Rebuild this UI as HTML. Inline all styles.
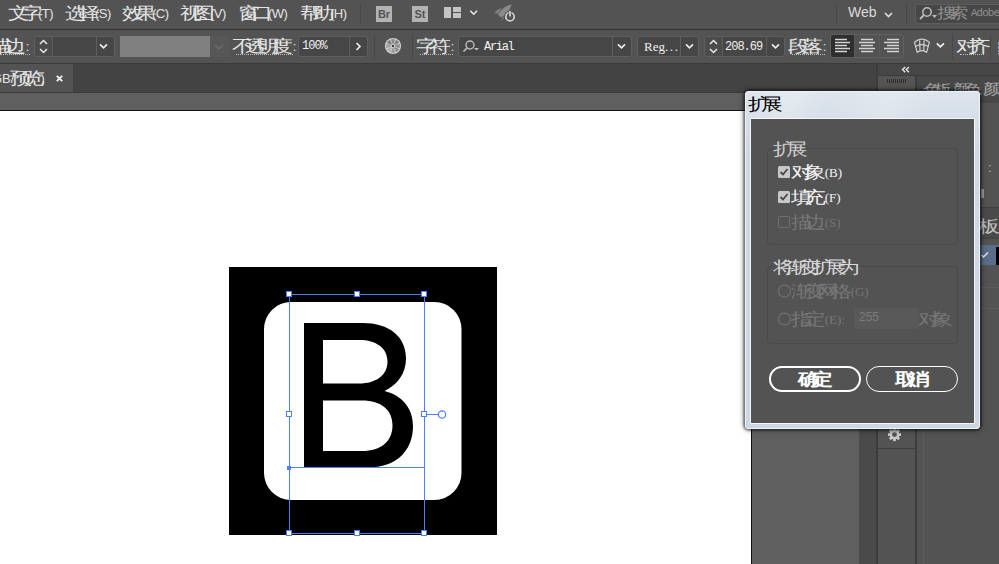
<!DOCTYPE html>
<html><head><meta charset="utf-8">
<style>
*{box-sizing:border-box;margin:0;padding:0}
html,body{width:999px;height:564px;overflow:hidden;background:#535353;font-family:"Liberation Sans",sans-serif}
.a{position:absolute}
.t{position:absolute;white-space:nowrap;color:#e4e4e4;font-size:13px;line-height:15px}
.m{font-family:"Liberation Mono",monospace}
.sep{position:absolute;width:1px;background:#444}
.box{position:absolute;background:#464646;border:1px solid #5f5f5f;border-radius:3px}
.dv{position:absolute;width:1px;background:#5c5c5c}
.ul{border-bottom:1px dotted #cfcfcf}
.c{display:inline-block;width:1em;text-align:center;transform:scale(1.65,1.28)}.cc{display:inline-block;width:1em;text-align:center}</style></head><body>
<!-- menu bar -->
<div class="a" style="left:0;top:0;width:999px;height:29px;background:#535353"></div>
<div class="a" style="left:0;top:29px;width:999px;height:1px;background:#333"></div>
<div class="t" style="left:12px;top:6px;letter-spacing:-0.5px"><span class="c">文</span><span class="c">字</span>(T)</div>
<div class="t" style="left:69px;top:6px;letter-spacing:-0.5px"><span class="c">选</span><span class="c">择</span>(S)</div>
<div class="t" style="left:126px;top:6px;letter-spacing:-0.5px"><span class="c">效</span><span class="c">果</span>(C)</div>
<div class="t" style="left:184px;top:6px;letter-spacing:-0.5px"><span class="c">视</span><span class="c">图</span>(V)</div>
<div class="t" style="left:242px;top:6px;letter-spacing:-0.5px"><span class="c">窗</span><span class="c">口</span>(W)</div>
<div class="t" style="left:304px;top:6px;letter-spacing:-0.5px"><span class="c">帮</span><span class="c">助</span>(H)</div>
<div class="sep" style="left:360px;top:4px;height:20px;background:#474747"></div>
<!-- Br / St -->
<div class="a" style="left:376px;top:6px;width:16px;height:16px;background:#b3b3b3"></div>
<div class="a" style="left:376px;top:6px;width:16px;height:16px;color:#535353;font:bold 11px/16px 'Liberation Sans';text-align:center">Br</div>
<div class="a" style="left:412px;top:6px;width:16px;height:16px;background:#b3b3b3"></div>
<div class="a" style="left:412px;top:6px;width:16px;height:16px;color:#535353;font:bold 11px/16px 'Liberation Sans';text-align:center">St</div>
<svg class="a" style="left:440px;top:0" width="100" height="29">
 <rect x="4" y="7" width="7" height="11" fill="#c4c4c4"/>
 <rect x="13" y="7" width="8" height="5" fill="#c4c4c4"/>
 <rect x="13" y="13" width="8" height="5" fill="#c4c4c4"/>
 <path d="M30.3 10.8 L33.7 14.2 L37.1 10.8" stroke="#e8e8e8" stroke-width="1.6" fill="none"/>
 <path d="M71.5 4.5 C66 5.5 61 9.5 58 14.5 L61 17.5 C66 14.5 70 10.5 71.5 4.5 Z" fill="#8a8a8a"/>
 <path d="M54 13.5 C56 10.5 59 8.5 62 8 L58 13.5 Z" fill="#808080"/>
 <path d="M61.5 21 L62.5 17.5 L65 16.5 Z" fill="#808080"/>
 <circle cx="70" cy="16.7" r="6" fill="#535353"/>
 <circle cx="70" cy="16.7" r="4.2" stroke="#d4d4d4" stroke-width="1.7" fill="none"/>
 <path d="M70 11 V17" stroke="#535353" stroke-width="3"/>
 <path d="M70 11 V16.5" stroke="#d4d4d4" stroke-width="1.7"/>
</svg>
<div class="sep" style="left:836px;top:4px;height:20px;background:#474747"></div>
<div class="t" style="left:848px;top:5px;color:#dcdcdc;font-size:14px">Web</div>
<svg class="a" style="left:883px;top:10px" width="12" height="10"><path d="M2 3 L5.5 6.5 L9 3" stroke="#e0e0e0" stroke-width="1.6" fill="none"/></svg>
<div class="sep" style="left:906px;top:4px;height:20px;background:#474747"></div>
<div class="a" style="left:915px;top:4px;width:100px;height:20px;background:#474747;border:1px solid #5d5d5d;border-radius:3px"></div>
<svg class="a" style="left:918px;top:4px" width="22" height="20">
 <circle cx="9" cy="8" r="4.2" stroke="#bdbdbd" stroke-width="1.5" fill="none"/>
 <path d="M6 11 L2 15" stroke="#bdbdbd" stroke-width="1.8"/>
 <path d="M14 11 L19 11 L16.5 14 Z" fill="#bdbdbd"/>
</svg>
<div class="t" style="left:941px;top:6px;color:#8f8f8f;font-size:12px"><span class="c">搜</span><span class="c">索</span></div>
<div class="t m" style="left:971px;top:6px;color:#8f8f8f;font-size:11px;letter-spacing:-1px">Adobe</div>


<!-- control bar -->
<div class="a" style="left:0;top:30px;width:999px;height:33px;background:#535353"></div>
<div class="a" style="left:0;top:63px;width:999px;height:1px;background:#3a3a3a"></div>


<!-- control bar items -->
<div class="t" style="left:-5px;top:39px"><span class="c">描</span><span class="c">边</span><span class="cc">:</span></div>
<div class="a ul" style="left:0;top:54px;width:30px;height:1px;border-bottom-color:#bdbdbd"></div>
<div class="box" style="left:34px;top:36px;width:81px;height:21px"></div>
<div class="a" style="left:35px;top:37px;width:17px;height:19px;background:#4b4b4b;border-radius:2px 0 0 2px"></div>
<div class="dv" style="left:52px;top:37px;height:19px"></div>
<div class="dv" style="left:96px;top:37px;height:19px"></div>
<svg class="a" style="left:36px;top:37px" width="16" height="19"><path d="M4 7 L7.5 3.5 L11 7 M4 12 L7.5 15.5 L11 12" stroke="#e8e8e8" stroke-width="1.5" fill="none"/></svg>
<svg class="a" style="left:97px;top:37px" width="16" height="19"><path d="M3 7.3 L6.5 10.8 L10 7.3" stroke="#ececec" stroke-width="1.7" fill="none"/></svg>
<div class="a" style="left:120px;top:36px;width:90px;height:21px;background:#808080"></div>
<div class="a" style="left:210px;top:36px;width:19px;height:21px;background:#575757;border-radius:0 2px 2px 0"></div>
<svg class="a" style="left:212px;top:37px" width="16" height="19"><path d="M3 8 L7 12 L11 8" stroke="#6d6d6d" stroke-width="1.4" fill="none"/></svg>
<div class="t" style="left:236px;top:39px"><span class="c">不</span><span class="c">透</span><span class="c">明</span><span class="c">度</span><span class="cc">:</span></div>
<div class="a ul" style="left:236px;top:54px;width:57px;height:1px;border-bottom-color:#bdbdbd"></div>
<div class="box" style="left:298px;top:36px;width:70px;height:21px"></div>
<div class="dv" style="left:349px;top:37px;height:19px"></div>
<div class="t m" style="left:302px;top:39px;color:#f0f0f0;font-size:12px;letter-spacing:-1px">100%</div>
<svg class="a" style="left:350px;top:37px" width="17" height="19"><path d="M6.5 6 L10 9.5 L6.5 13" stroke="#ececec" stroke-width="1.7" fill="none"/></svg>
<div class="sep" style="left:374px;top:34px;height:25px;background:#484848"></div>
<svg class="a" style="left:383px;top:36px" width="20" height="20">
 <circle cx="10" cy="10" r="8.1" fill="#d2d2d2"/>
 <path d="M9.29 7.81 L7.87 3.44 A6.9 6.9 0 0 1 12.13 3.44 L10.71 7.81 A2.3 2.3 0 0 0 9.29 7.81 Z" fill="#8a8a8a"/>
 <path d="M11.04 7.95 L13.13 3.85 A6.9 6.9 0 0 1 16.15 6.87 L12.05 8.96 A2.3 2.3 0 0 0 11.04 7.95 Z" fill="#808080"/>
 <path d="M12.19 9.29 L16.56 7.87 A6.9 6.9 0 0 1 16.56 12.13 L12.19 10.71 A2.3 2.3 0 0 0 12.19 9.29 Z" fill="#8e8e8e"/>
 <path d="M12.05 11.04 L16.15 13.13 A6.9 6.9 0 0 1 13.13 16.15 L11.04 12.05 A2.3 2.3 0 0 0 12.05 11.04 Z" fill="#8e8e8e"/>
 <path d="M10.71 12.19 L12.13 16.56 A6.9 6.9 0 0 1 7.87 16.56 L9.29 12.19 A2.3 2.3 0 0 0 10.71 12.19 Z" fill="#9a9a9a"/>
 <path d="M8.96 12.05 L6.87 16.15 A6.9 6.9 0 0 1 3.85 13.13 L7.95 11.04 A2.3 2.3 0 0 0 8.96 12.05 Z" fill="#b2b2b2"/>
 <path d="M7.81 10.71 L3.44 12.13 A6.9 6.9 0 0 1 3.44 7.87 L7.81 9.29 A2.3 2.3 0 0 0 7.81 10.71 Z" fill="#a0a0a0"/>
 <path d="M7.95 8.96 L3.85 6.87 A6.9 6.9 0 0 1 6.87 3.85 L8.96 7.95 A2.3 2.3 0 0 0 7.95 8.96 Z" fill="#7e7e7e"/>
 <circle cx="10" cy="10" r="1.2" fill="#3a3a3a"/>
</svg>
<div class="sep" style="left:412px;top:34px;height:25px;background:#484848"></div>
<div class="t" style="left:420px;top:39px"><span class="c">字</span><span class="c">符</span><span class="cc">:</span></div>
<div class="a ul" style="left:420px;top:54px;width:33px;height:1px;border-bottom-color:#bdbdbd"></div>
<div class="box" style="left:458px;top:36px;width:174px;height:21px"></div>
<div class="dv" style="left:612px;top:37px;height:19px"></div>
<svg class="a" style="left:460px;top:37px" width="22" height="19">
 <circle cx="10" cy="8" r="4" stroke="#bdbdbd" stroke-width="1.4" fill="none"/>
 <path d="M7.5 10.5 L3.5 14.5" stroke="#bdbdbd" stroke-width="1.7"/>
 <path d="M14 11 L19 11 L16.5 13.5 Z" fill="#bdbdbd"/>
</svg>
<div class="t m" style="left:484px;top:40px;color:#f4f4f4;font-size:12px;letter-spacing:-1.3px">Arial</div>
<svg class="a" style="left:613px;top:37px" width="18" height="19"><path d="M5 7.3 L8.5 10.8 L12 7.3" stroke="#ececec" stroke-width="1.7" fill="none"/></svg>
<div class="box" style="left:637px;top:36px;width:62px;height:21px"></div>
<div class="dv" style="left:680px;top:37px;height:19px"></div>
<div class="t" style="left:644px;top:39px;color:#f0f0f0;font-family:'Liberation Serif';font-size:13px;letter-spacing:0px">Reg<span style="letter-spacing:1.6px">...</span></div>
<svg class="a" style="left:681px;top:37px" width="18" height="19"><path d="M5 7.3 L8.5 10.8 L12 7.3" stroke="#ececec" stroke-width="1.7" fill="none"/></svg>
<div class="box" style="left:704px;top:36px;width:81px;height:21px"></div>
<div class="a" style="left:705px;top:37px;width:17px;height:19px;background:#4b4b4b;border-radius:2px 0 0 2px"></div>
<div class="dv" style="left:722px;top:37px;height:19px"></div>
<div class="dv" style="left:766px;top:37px;height:19px"></div>
<svg class="a" style="left:705px;top:37px" width="17" height="19"><path d="M5 7 L8.5 3.5 L12 7 M5 12 L8.5 15.5 L12 12" stroke="#e8e8e8" stroke-width="1.5" fill="none"/></svg>
<div class="t m" style="left:725px;top:40px;color:#f0f0f0;font-size:12px;letter-spacing:-1px">208.69</div>
<svg class="a" style="left:767px;top:37px" width="17" height="19"><path d="M5 7.3 L8.5 10.8 L12 7.3" stroke="#ececec" stroke-width="1.7" fill="none"/></svg>
<div class="t" style="left:792px;top:39px"><span class="c">段</span><span class="c">落</span><span class="cc">:</span></div>
<div class="a ul" style="left:792px;top:54px;width:33px;height:1px;border-bottom-color:#bdbdbd"></div>
<div class="box" style="left:830px;top:34px;width:74px;height:24px;background:#535353;border-color:#616161;border-radius:4px"></div>
<div class="a" style="left:831px;top:35px;width:23px;height:22px;background:#2e2e2e;border-radius:3px 0 0 3px"></div>
<div class="dv" style="left:854px;top:36px;height:21px;background:#5a5a5a"></div>
<div class="dv" style="left:879px;top:36px;height:21px;background:#5a5a5a"></div>
<svg class="a" style="left:831px;top:35px" width="73" height="23">
 <g stroke="#d4d4d4" stroke-width="1.3">
  <path d="M4 4.5 H16 M4 7.5 H19 M4 10.5 H16 M4 13.5 H19 M4 16.5 H16"/>
  <path d="M30 4.5 H42 M28 7.5 H44 M30 10.5 H42 M28 13.5 H44 M30 16.5 H42"/>
  <path d="M56 4.5 H68 M53 7.5 H68 M56 10.5 H68 M53 13.5 H68 M56 16.5 H68"/>
 </g>
</svg>
<svg class="a" style="left:911px;top:36px" width="38" height="20">
 <path d="M3.4 6.2 Q10.9 0 18.4 6.2 L15.6 16.3 Q10.9 12.8 6.2 16.3 Z M4.7 10.3 Q10.9 6.8 17.1 10.3 M8.6 2.9 L9 14.3 M13.2 2.9 L12.8 14.3" stroke="#cfcfcf" stroke-width="1.2" fill="none" stroke-linejoin="round"/>
 <path d="M25.8 7.3 L29.4 10.9 L33 7.3" stroke="#f0f0f0" stroke-width="1.7" fill="none"/>
</svg>
<div class="sep" style="left:952px;top:34px;height:25px;background:#484848"></div>
<div class="t" style="left:960px;top:39px"><span class="c">对</span><span class="c">齐</span></div>
<div class="a ul" style="left:960px;top:54px;width:24px;height:1px;border-bottom-color:#bdbdbd"></div>
<div class="sep" style="left:990px;top:34px;height:25px;background:#484848"></div>
<div class="a" style="left:998px;top:42px;width:1px;height:3px;background:#8ea6c4"></div><div class="a" style="left:998px;top:46px;width:1px;height:3px;background:#8ea6c4"></div><div class="a" style="left:998px;top:50px;width:1px;height:2px;background:#8ea6c4"></div><div class="a" style="left:998px;top:53px;width:1px;height:1px;background:#cfcfcf"></div>

<!-- tab bar -->
<div class="a" style="left:0;top:64px;width:999px;height:28px;background:#434343"></div>
<div class="a" style="left:0;top:64px;width:73px;height:28px;background:#535353"></div>
<div class="a" style="left:0;top:92px;width:751px;height:1px;background:#3a3a3a"></div>
<div class="a" style="left:0;top:93px;width:751px;height:17px;background:#5f5f5f"></div>
<div class="a" style="left:0;top:110px;width:751px;height:1px;background:#111"></div>
<!-- canvas -->
<div class="a" style="left:0;top:111px;width:751px;height:453px;background:#fff"></div>
<div class="a" style="left:751px;top:92px;width:1px;height:472px;background:#111"></div>
<div class="a" style="left:752px;top:92px;width:107px;height:472px;background:#5f5f5f"></div>
<div class="a" style="left:859px;top:92px;width:17px;height:472px;background:#4a4a4a"></div>
<div class="a" style="left:878px;top:64px;width:121px;height:500px;background:#535353"></div>
<div class="a" style="left:876px;top:64px;width:2px;height:500px;background:#3c3c3c"></div>


<!-- tab text -->
<div class="t" style="left:-8px;top:71px;color:#e6e6e6">GB/<span class="c">预</span><span class="c">览</span>)</div>
<svg class="a" style="left:55px;top:74px" width="10" height="10"><path d="M1.8 1.8 L7.2 7.2 M7.2 1.8 L1.8 7.2" stroke="#f0f0f0" stroke-width="1.9"/></svg>

<!-- artwork -->
<svg class="a" style="left:0;top:0" width="751" height="564">
 <rect x="229" y="267" width="268" height="268" fill="#000"/>
 <rect x="264" y="302" width="197.5" height="198" rx="27" ry="27" fill="#fff"/>
 <path fill="#000" fill-rule="evenodd" d="M304 323 H363 C389 323 406 336.5 406 358.5 C406 374 397 385 384.5 391 C402 395.5 413 408 413 426 C413 451 396 467.5 368 467.5 H304 Z
  M323 340 V383.5 H359 C376.5 383.5 387.5 375 387.5 361.5 C387.5 348 376.5 340 359 340 Z
  M323 400.5 V451 H362 C381.5 451 392.5 441 392.5 425.5 C392.5 410 381.5 400.5 362 400.5 Z"/>
 <g stroke="#4d7eff" stroke-width="1" fill="none" shape-rendering="crispEdges">
  <path d="M289.5 294.5 H424.5 V533.5 H289.5 Z"/>
  <path d="M289.5 467.5 H424.5"/>
  <path d="M424.5 414.5 H438"/>
 </g>
 <g stroke="#4d7eff" stroke-width="1" fill="#fff" shape-rendering="crispEdges">
  <rect x="286.5" y="291.5" width="5" height="5"/>
  <rect x="354.5" y="291.5" width="5" height="5"/>
  <rect x="421.5" y="291.5" width="5" height="5"/>
  <rect x="286.5" y="411.5" width="5" height="5"/>
  <rect x="421.5" y="411.5" width="5" height="5"/>
  <rect x="286.5" y="530.5" width="5" height="5"/>
  <rect x="354.5" y="530.5" width="5" height="5"/>
  <rect x="421.5" y="530.5" width="5" height="5"/>
 </g>
 <rect x="287" y="466" width="4" height="4" fill="#4d7eff"/>
 <circle cx="442" cy="414.5" r="3.7" stroke="#4d7eff" stroke-width="1.2" fill="#fff"/>
</svg>

<!-- right dock -->
<div class="a" style="left:878px;top:64px;width:121px;height:11px;background:#464646"></div>
<svg class="a" style="left:900px;top:65px" width="12" height="9"><path d="M5.2 2 L2.6 4.6 L5.2 7.2 M8.9 2 L6.3 4.6 L8.9 7.2" stroke="#e0e0e0" stroke-width="1.5" fill="none"/></svg>
<div class="a" style="left:878px;top:75px;width:121px;height:1px;background:#3c3c3c"></div>
<div class="a" style="left:878px;top:76px;width:37px;height:27px;background:#545454"></div>
<svg class="a" style="left:886px;top:78px" width="22" height="6"><path d="M1.5 1 V5 M3.5 1 V5 M5.5 1 V5 M7.5 1 V5 M9.5 1 V5 M11.5 1 V5 M13.5 1 V5 M15.5 1 V5 M17.5 1 V5 M19.5 1 V5" stroke="#2e2e2e" stroke-width="1"/></svg>
<div class="a" style="left:915px;top:76px;width:2px;height:488px;background:#3d3d3d"></div>
<div class="a" style="left:917px;top:76px;width:82px;height:27px;background:#484848"></div>
<div class="a" style="left:949px;top:75px;width:1px;height:28px;background:#424242"></div>
<div class="a" style="left:978px;top:75px;width:1px;height:28px;background:#424242"></div>
<div class="t" style="left:927px;top:82px;color:#a8a8a8;font-size:11px"><span class="c">色</span><span class="c">板</span></div>
<div class="t" style="left:957px;top:82px;color:#a8a8a8;font-size:11px"><span class="c">颜</span><span class="c">色</span></div>
<div class="t" style="left:987px;top:82px;color:#a8a8a8;font-size:12px"><span class="c">颜</span></div>
<div class="a" style="left:917px;top:103px;width:82px;height:461px;background:#535353"></div>
<div class="a" style="left:923px;top:103px;width:1px;height:461px;background:#5c5c5c"></div>
<div class="t" style="left:988px;top:160px;color:#bbb">:</div>
<div class="a" style="left:981px;top:189px;width:3px;height:9px;background:#9a9a9a"></div>
<div class="a" style="left:917px;top:207px;width:82px;height:1px;background:#3f3f3f"></div>
<div class="a" style="left:917px;top:208px;width:82px;height:30px;background:#4a4a4a"></div>
<div class="a" style="left:917px;top:238px;width:82px;height:1px;background:#424242"></div>
<div class="t" style="left:982px;top:219px;color:#c4c4c4"><span class="c">板</span></div>
<div class="a" style="left:917px;top:245px;width:82px;height:20px;background:#5a6d88"></div>
<svg class="a" style="left:980px;top:250px" width="10" height="10"><path d="M1.5 5 L3.5 7 L8 2.5" stroke="#e8e8e8" stroke-width="1.4" fill="none"/></svg>
<div class="a" style="left:996px;top:247px;width:3px;height:18px;background:#000"></div>
<div class="a" style="left:917px;top:287px;width:82px;height:1px;background:#5c5c5c"></div>
<div class="a" style="left:917px;top:308px;width:82px;height:1px;background:#5c5c5c"></div>
<div class="a" style="left:878px;top:448px;width:37px;height:1px;background:#3d3d3d"></div>
<svg class="a" style="left:886px;top:426px" width="17" height="17">
 <g transform="translate(8.5,8.6)" fill="#c8c8c8">
  <circle r="4.9"/>
  <rect x="-1.4" y="-6.5" width="2.8" height="13"/>
  <rect x="-1.4" y="-6.5" width="2.8" height="13" transform="rotate(45)"/>
  <rect x="-1.4" y="-6.5" width="2.8" height="13" transform="rotate(90)"/>
  <rect x="-1.4" y="-6.5" width="2.8" height="13" transform="rotate(135)"/>
  <circle r="2.4" fill="#535353"/>
 </g>
</svg>

<!-- dialog -->
<div class="a" style="left:744px;top:90px;width:237px;height:340px;border-radius:5px;background:rgba(0,0,0,.5);box-shadow:0 0 6px rgba(0,0,0,.35), 0 0 2px 1px rgba(0,0,0,.4)"></div>
<div class="a" style="left:745px;top:91px;width:235px;height:338px;border-radius:4px;background:linear-gradient(180deg,#dde4ec 0px,#d6dee8 27px,#cfd9e4 60px,#cdd7e3 100%);box-shadow:inset 0 0 0 1px #eef2f6"></div>
<div class="a" style="left:746px;top:92px;width:233px;height:26px;border-radius:3px 3px 0 0;background:linear-gradient(110deg,rgba(255,255,255,0) 0%,rgba(255,255,255,.25) 20%,rgba(255,255,255,0) 35%,rgba(255,255,255,.2) 60%,rgba(255,255,255,0) 80%)"></div>
<div class="t" style="left:752px;top:97px;color:#000;font-size:13px"><span class="c">扩</span><span class="c">展</span></div>
<div class="a" style="left:750px;top:118px;width:225px;height:306px;background:#f4f6f8"></div>
<div class="a" style="left:751px;top:119px;width:223px;height:304px;background:#535353"></div>

<div class="a" style="left:767px;top:148px;width:191px;height:97px;border:1px solid #4a4a4a;border-radius:4px"></div>
<div class="a" style="left:774px;top:142px;width:32px;height:14px;background:#535353"></div>
<div class="t" style="left:777px;top:142px;color:#cdcdcd"><span class="c">扩</span><span class="c">展</span></div>
<svg class="a" style="left:776px;top:164px" width="16" height="66">
 <rect x="2" y="2" width="12" height="12" rx="1.5" fill="#c8c8c8"/>
 <path d="M4.5 8 L7 10.5 L11.5 5" stroke="#474747" stroke-width="1.8" fill="none"/>
 <rect x="2" y="27" width="12" height="12" rx="1.5" fill="#c8c8c8"/>
 <path d="M4.5 33 L7 35.5 L11.5 30" stroke="#474747" stroke-width="1.8" fill="none"/>
 <rect x="2.5" y="52.5" width="11" height="11" rx="1" stroke="#707070" stroke-width="1" fill="none"/>
</svg>
<div class="t" style="left:795px;top:165px;color:#f4f4f4;"><span class="c">对</span><span class="c">象</span> <span style="font-family:'Liberation Serif'">(B)</span></div>
<div class="t" style="left:795px;top:190px;color:#f4f4f4;"><span class="c">填</span><span class="c">充</span> <span style="font-family:'Liberation Serif'">(F)</span></div>
<div class="t" style="left:795px;top:215px;color:#767676;"><span class="c">描</span><span class="c">边</span> <span style="font-family:'Liberation Serif'">(S)</span></div>

<div class="a" style="left:767px;top:266px;width:191px;height:78px;border:1px solid #4a4a4a;border-radius:4px"></div>
<div class="a" style="left:774px;top:259px;width:84px;height:14px;background:#535353"></div>
<div class="t" style="left:777px;top:260px;color:#d8d8d8"><span class="c">将</span><span class="c">渐</span><span class="c">变</span><span class="c">扩</span><span class="c">展</span><span class="c">为</span></div>
<svg class="a" style="left:776px;top:282px" width="18" height="46">
 <circle cx="8.5" cy="9" r="6" stroke="#6c6c6c" stroke-width="1.3" fill="none"/>
 <circle cx="8.5" cy="37" r="6" stroke="#6c6c6c" stroke-width="1.3" fill="none"/>
</svg>
<div class="t" style="left:795px;top:284px;color:#767676;"><span class="c">渐</span><span class="c">变</span><span class="c">网</span><span class="c">格</span> <span style="font-family:'Liberation Serif'">(G)</span></div>
<div class="t" style="left:795px;top:312px;color:#767676;"><span class="c">指</span><span class="c">定</span> <span style="font-family:'Liberation Serif'">(E):</span></div>
<div class="a" style="left:854px;top:308px;width:65px;height:21px;background:#595959"></div>
<div class="t" style="left:859px;top:310px;color:#7b7b7b;font-size:12px">255</div>
<div class="t" style="left:922px;top:312px;color:#767676"><span class="c">对</span><span class="c">象</span></div>

<div class="a" style="left:769px;top:366px;width:92px;height:26px;border:2px solid #fff;border-radius:13px"></div>
<div class="t" style="left:769px;top:372px;width:92px;text-align:center;color:#fff;font-weight:bold"><span class="c">确</span><span class="c">定</span></div>
<div class="a" style="left:866px;top:366px;width:92px;height:26px;border:1.5px solid #fff;border-radius:13px"></div>
<div class="t" style="left:866px;top:372px;width:92px;text-align:center;color:#fff;font-weight:bold"><span class="c">取</span><span class="c">消</span></div>
</body></html>
